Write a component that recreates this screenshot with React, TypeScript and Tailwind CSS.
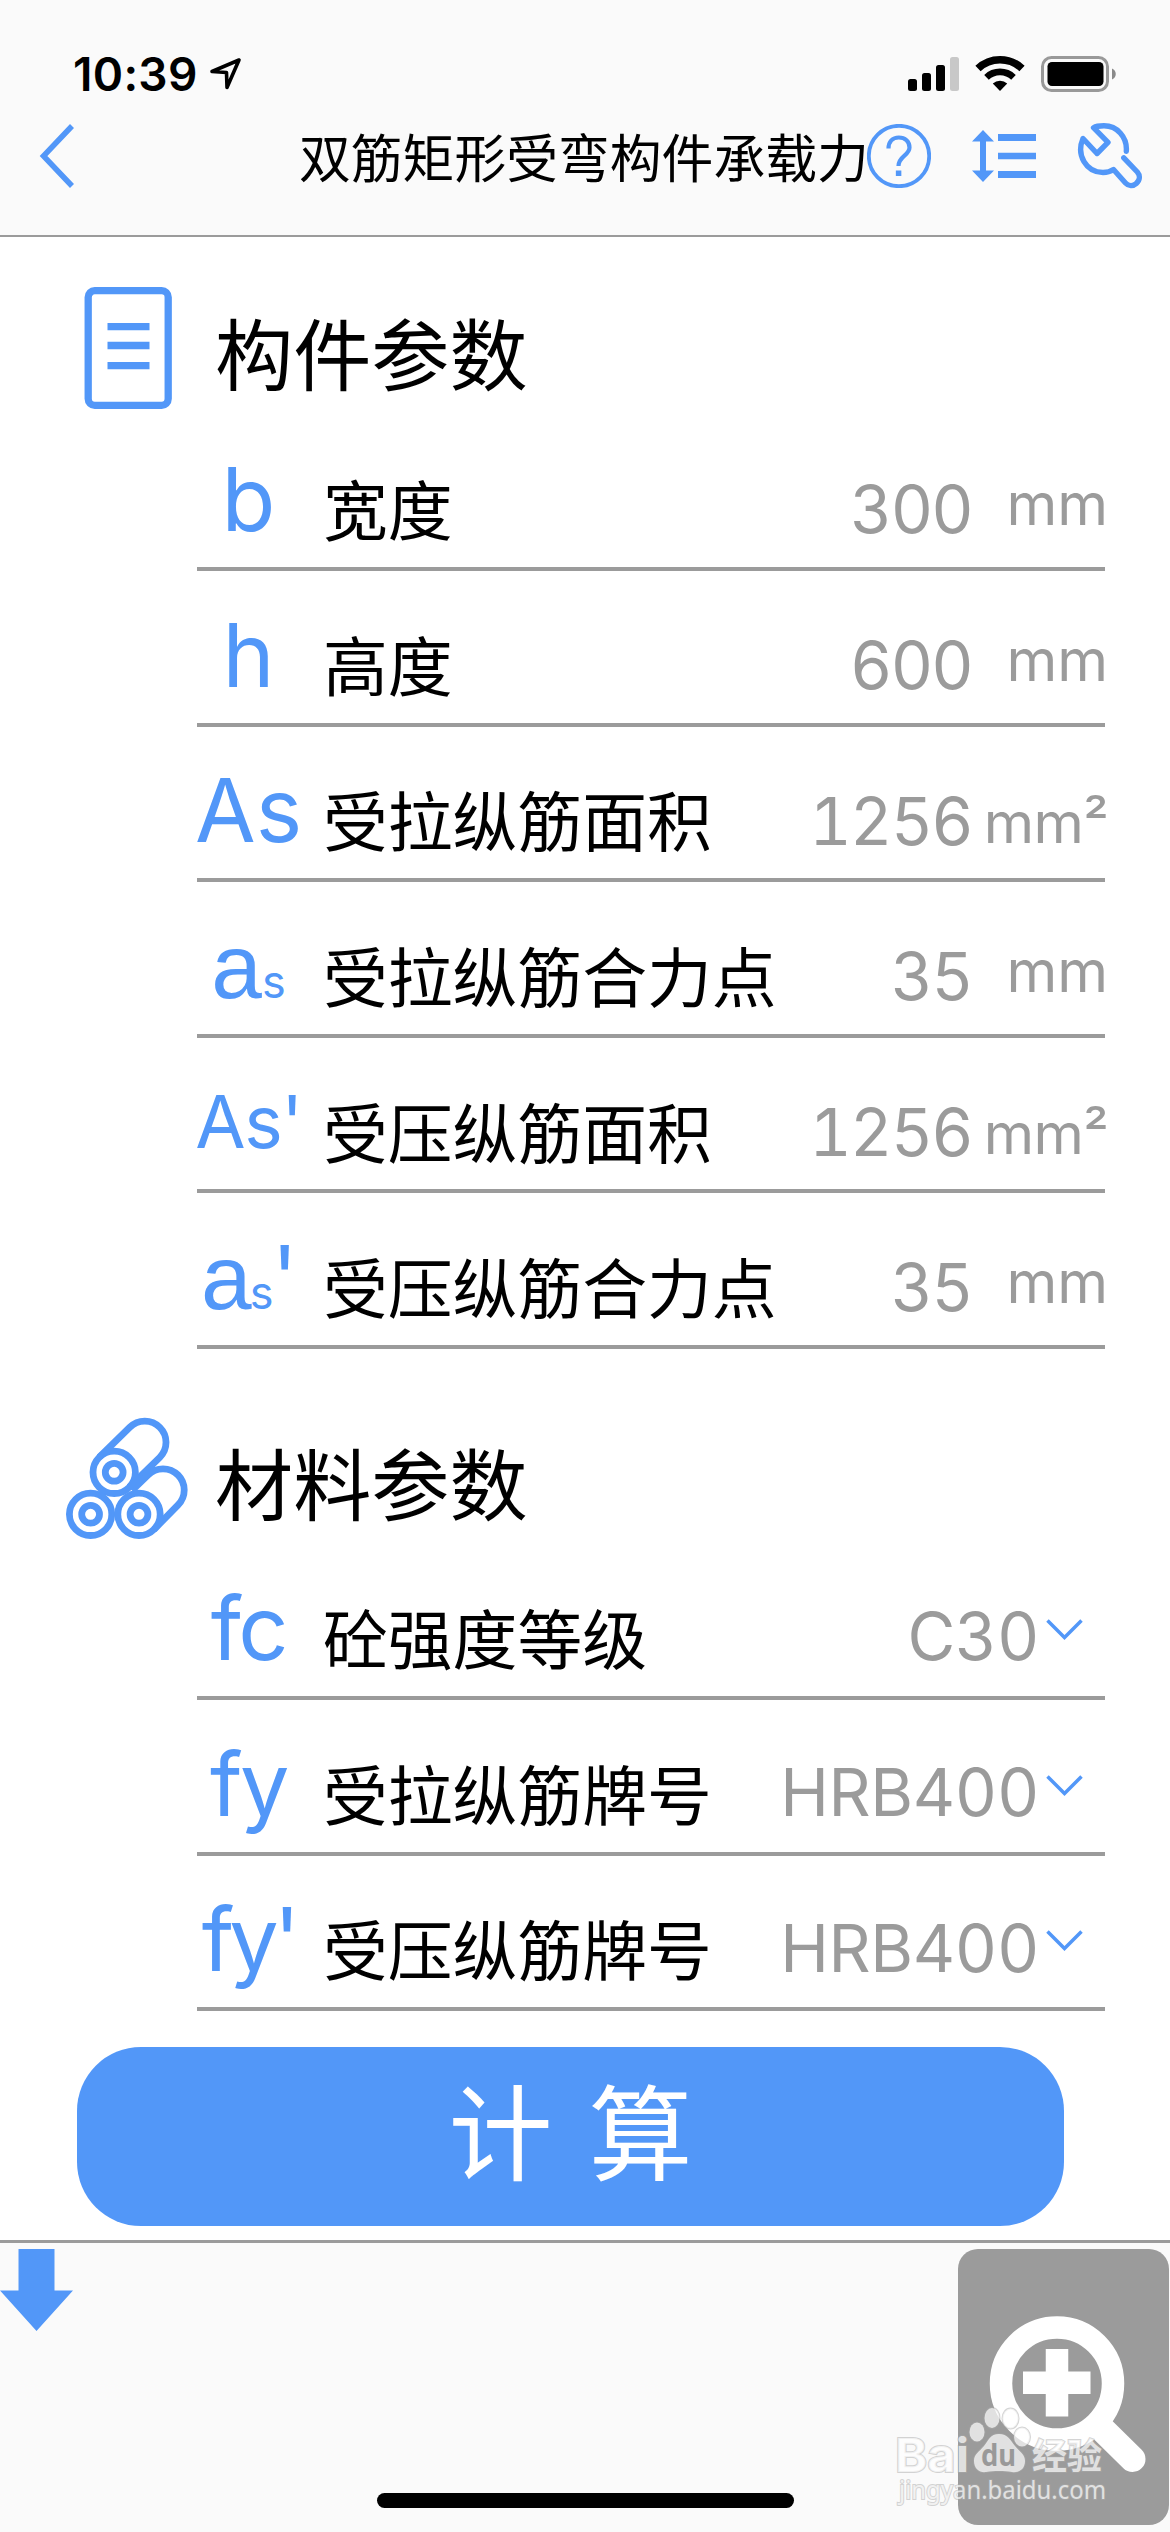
import React from "react";

interface ParamField {
  id: string;
  symbol: React.ReactNode;
  label: string;
  value: string;
  unit?: "mm" | "mm²";
}

const aSub = (
  <>
    <span className="font-['Liberation_Sans'] text-[91px] leading-[0]">a</span>
    <span className="text-[45px] leading-[0]">s</span>
  </>
);

const memberFields: ParamField[] = [
  { id: "b", symbol: "b", label: "宽度", value: "300", unit: "mm" },
  { id: "h", symbol: "h", label: "高度", value: "600", unit: "mm" },
  { id: "As", symbol: "As", label: "受拉纵筋面积", value: "1256", unit: "mm²" },
  { id: "as", symbol: aSub, label: "受拉纵筋合力点", value: "35", unit: "mm" },
  {
    id: "As2",
    symbol: <span className="relative -top-[5px] text-[73px] leading-[0] tracking-[-1.5px]">As'</span>,
    label: "受压纵筋面积",
    value: "1256",
    unit: "mm²",
  },
  {
    id: "as2",
    symbol: <span className="tracking-[-2px]">{aSub}'</span>,
    label: "受压纵筋合力点",
    value: "35",
    unit: "mm",
  },
];

const materialFields: ParamField[] = [
  { id: "fc", symbol: <span className="tracking-[-2.5px]">fc</span>, label: "砼强度等级", value: "C30" },
  { id: "fy", symbol: <span className="tracking-[-2.5px]">fy</span>, label: "受拉纵筋牌号", value: "HRB400" },
  { id: "fy2", symbol: <span className="tracking-[-5px]">fy'</span>, label: "受压纵筋牌号", value: "HRB400" },
];

function StatusBar() {
  return (
    <div className="flex h-[110px] shrink-0 items-start pt-[54px] pl-[73px] pr-[53px]">
      <span className="text-[46px] font-semibold leading-[40px] tracking-[0.3px]">10:39</span>
      <svg className="ml-[11px] mt-[2px]" width="34" height="36" viewBox="0 0 34 36" fill="none">
        <path d="M30 4 3 15.5 17.5 16.5 18 31.5Z" stroke="#000" strokeWidth="3.6" strokeLinejoin="round" />
      </svg>
      <div className="ml-auto flex items-start">
        <svg width="52" height="36" viewBox="0 0 52 36" className="mt-[2px]">
          <rect x="0" y="23" width="9" height="12" rx="2.5" />
          <rect x="14" y="17" width="9" height="18" rx="2.5" />
          <rect x="28" y="9" width="9" height="26" rx="2.5" />
          <rect x="42" y="1" width="9" height="34" rx="2.5" fill="#c8c8c8" />
        </svg>
        <svg className="ml-[15px]" width="50" height="38" viewBox="0 0 50 38" fill="none" stroke="#000">
          <path d="M3 14.5a32 32 0 0 1 44 0" strokeWidth="7.6" />
          <path d="M11.5 23.3a19.5 19.5 0 0 1 27 0" strokeWidth="6.6" />
          <path d="M25 37 17.8 29.6a10.5 10.5 0 0 1 14.4 0Z" fill="#000" stroke="none" />
        </svg>
        <svg className="ml-[16px] mt-[2px]" width="76" height="36" viewBox="0 0 76 36">
          <rect x="1.5" y="1.5" width="65" height="33" rx="9" fill="none" stroke="#999" strokeWidth="3" />
          <rect x="6.5" y="6" width="56" height="24" rx="4.5" />
          <path d="M71 12.5c5 2 5 9 0 11Z" fill="#8a8a8a" />
        </svg>
      </div>
    </div>
  );
}

function NavBar() {
  return (
    <div className="flex h-[125px] shrink-0 items-start pl-[38px] text-[#5297f8]">
      <svg className="mt-[12px]" width="38" height="68" viewBox="0 0 38 68" fill="none">
        <path d="M34 4 5.5 34 34 64" stroke="currentColor" strokeWidth="5.5" />
      </svg>
      <h1 className="ml-[223px] mt-[20px] w-[568px] whitespace-nowrap font-['Noto_Sans_CJK_SC'] text-[51.8px] leading-none text-black">
        双筋矩形受弯构件承载力
      </h1>
      <svg className="mt-[14px] shrink-0" width="64" height="64" viewBox="0 0 64 64" fill="none">
        <circle cx="32" cy="32" r="30.2" stroke="currentColor" strokeWidth="3.8" />
        <path
          d="M21.5 24.5c0-7 4-11 10.3-11s10.7 4 10.7 10c0 8-11 8.5-11 18.5"
          stroke="currentColor"
          strokeWidth="4.2"
        />
        <path d="M31.6 46.500v5.5" stroke="currentColor" strokeWidth="5.5" />
      </svg>
      <svg className="ml-[41px] mt-[20px] shrink-0" width="64" height="52" viewBox="0 0 64 52" fill="currentColor">
        <path d="M11 0 22 11.5H14V40.5h8L11 52 0 40.5H8V11.5H0Z" />
        <path d="M26 4h38v7H26zM26 22.7h38v6.6H26zM26 41h38v7H26z" />
      </svg>
      <svg className="ml-[41px] mt-[13px] shrink-0" width="66" height="66" viewBox="0 0 66 66" fill="none">
        <path
          d="M49.3 28.3C50.5 14 40 2.8 27 2.8c-4.5 0-8 .4-10.5 1.9L31 19.3 20 30.5 6 15.5C-1 32 9 49.5 26 49.5c4 0 7.5-1 10.5-3L48.5 60c3 3.3 7.5 3.5 10.8.5 3.7-3.3 4-8 1-11.5L46.8 34.8"
          stroke="currentColor"
          strokeWidth="5.4"
          strokeLinecap="round"
          strokeLinejoin="round"
        />
      </svg>
    </div>
  );
}

function DocumentIcon() {
  return (
    <svg width="122" height="122" viewBox="0 0 122 122" fill="none" stroke="#5297f8" strokeWidth="7.3">
      <rect x="22.2" y="3.7" width="80" height="114.6" rx="6.5" />
      <path d="M41.5 39.7h42M41.5 58.5h42M41.5 78.7h42" />
    </svg>
  );
}

function LogsIcon() {
  return (
    <svg width="122" height="122" viewBox="0 0 122 122" fill="none" stroke="#5297f8" strokeWidth="6.8">
      <path d="m33.2 40.3 30.6-30A21.2 21.2 0 0 1 93.8 40.3l-30.6 30" />
      <path d="M66 73.5 82 58a21.2 21.2 0 0 1 30 30L88 112.500" />
      <circle cx="48.2" cy="55.3" r="21.2" />
      <circle cx="48.2" cy="55.3" r="8.9" />
      <circle cx="24.6" cy="97.3" r="21.2" />
      <circle cx="24.6" cy="97.3" r="8.9" />
      <circle cx="73" cy="97.3" r="21.2" />
      <circle cx="73" cy="97.3" r="8.9" />
    </svg>
  );
}

function SectionHeading({ icon, title }: { icon: React.ReactNode; title: string }) {
  return (
    <div className="flex h-[122px] shrink-0 items-center gap-[27px] pl-[66px]">
      {icon}
      <h2 className="pt-[6px] font-['Noto_Sans_CJK_SC'] text-[78.2px] leading-none">{title}</h2>
    </div>
  );
}

function FieldRow({ field }: { field: ParamField }) {
  return (
    <div className="ml-[197px] flex h-[155.6px] w-[908px] shrink-0 items-end whitespace-nowrap border-b-4 border-[#9b9b9b]">
      <div className="mb-[24px] flex h-[88px] w-[103px] justify-center text-[88px] leading-[88px] text-[#5297f8]">
        <span>{field.symbol}</span>
      </div>
      <div className="mb-[27px] ml-[23px] font-['Noto_Sans_CJK_SC'] text-[64.8px] leading-none">{field.label}</div>
      {field.unit ? (
        <>
          <div className="mb-[24px] ml-auto text-[65.5px] leading-none tracking-[-1.8px] tabular-nums text-[#9b9b9b]">
            {field.value}
          </div>
          {field.unit === "mm" ? (
            <div className="mb-[34px] -mr-[3px] w-[136px] text-right text-[58px] leading-none text-[#9b9b9b]">mm</div>
          ) : (
            <div className="mb-[27px] -mr-[3px] w-[136px] text-right text-[57.5px] leading-none tracking-[-0.6px] text-[#9b9b9b]">
              mm²
            </div>
          )}
        </>
      ) : (
        <>
          <div className="mb-[26px] ml-auto text-[65.5px] leading-none tracking-[-0.4px] tabular-nums text-[#9b9b9b]">
            {field.value}
          </div>
          <svg className="mb-[55px] ml-[7px] mr-[22px]" width="37" height="22" viewBox="0 0 37 22" fill="none">
            <path d="M1.5 1.5 18.5 18.5 35.5 1.5" stroke="#5297f8" strokeWidth="3.5" />
          </svg>
        </>
      )}
    </div>
  );
}

function Watermark() {
  return (
    <svg
      className="absolute bottom-[10px] right-[61px] overflow-visible font-['Noto_Sans','Noto_Sans_CJK_SC',sans-serif]"
      width="214"
      height="118"
      viewBox="0 0 214 118"
      fill="#fff"
      fillOpacity="0.7"
      stroke="#aaa"
      strokeOpacity="0.5"
      strokeWidth="2"
      paintOrder="stroke"
    >
      <text
        className="font-['Inter']"
        x="0"
        y="68"
        fontSize="47"
        fontWeight="700"
        textLength="74"
        lengthAdjust="spacingAndGlyphs"
      >
        Bai
      </text>
      <ellipse cx="82" cy="28" rx="7.5" ry="9.5" />
      <ellipse cx="97" cy="14" rx="7.5" ry="10" />
      <ellipse cx="115.5" cy="14.5" rx="8" ry="10" />
      <ellipse cx="127" cy="33" rx="8" ry="9.5" />
      <path d="M104 30c9 0 11 6 16 12s10 8 10 15c0 9-7 12-13 11-5-.8-8-1-13-1s-8 .2-13 1c-6 1-12-3-12-11 0-7 5-9 10-15s6-12 15-12Z" />
      <text
        x="86"
        y="62"
        fontSize="31"
        fontWeight="700"
        fill="#999"
        fillOpacity="1"
        stroke="none"
        textLength="35"
        lengthAdjust="spacingAndGlyphs"
      >
        du
      </text>
      <text x="137" y="65" fontSize="35" fontWeight="700" textLength="70" lengthAdjust="spacingAndGlyphs">
        经验
      </text>
      <text x="4" y="95" fontSize="25" textLength="207" lengthAdjust="spacingAndGlyphs">
        jingyan.baidu.com
      </text>
    </svg>
  );
}

function BottomBar() {
  return (
    <div className="relative flex h-[292px] shrink-0 items-start justify-between border-t-[3px] border-[#9b9b9b] bg-[#fafafa] pt-[6px] pr-px">
      <svg width="73" height="82" viewBox="0 0 73 82" fill="#5297f8">
        <path d="M18.5 0H54.5V41.5H73L36.5 82 0 41.5H18.5Z" />
      </svg>
      <div className="ml-[304px] mt-[244px] h-[15px] w-[417px] rounded-full bg-black" />
      <div className="ml-auto h-[276px] w-[211px] rounded-[20px] bg-[#9b9b9b]">
        <svg width="211" height="276" viewBox="0 0 211 276" fill="none" stroke="#fff">
          <circle cx="99" cy="134.5" r="56" strokeWidth="22.5" />
          <path d="M99 100v67.5M65 133.7h67.5" strokeWidth="22.5" />
          <path d="M142 178 174.5 210" strokeWidth="26" strokeLinecap="round" />
        </svg>
      </div>
      <Watermark />
    </div>
  );
}

export default function App() {
  return (
    <div className="flex h-[2532px] w-[1170px] flex-col overflow-hidden bg-white font-['Inter','Noto_Sans_CJK_SC',sans-serif] text-black">
      <header className="flex h-[237px] shrink-0 flex-col border-b-2 border-[#9b9b9b] bg-[#fafafa]">
        <StatusBar />
        <NavBar />
      </header>

      <main className="flex h-[2003px] shrink-0 flex-col pt-[50px]">
        <SectionHeading icon={<DocumentIcon />} title="构件参数" />
        <div className="flex flex-col pt-[6.4px]">
          {memberFields.map((field) => (
            <FieldRow key={field.id} field={field} />
          ))}
        </div>

        <div className="h-[68px] shrink-0" />
        <SectionHeading icon={<LogsIcon />} title="材料参数" />
        <div className="flex flex-col pt-[5.4px]">
          {materialFields.map((field) => (
            <FieldRow key={field.id} field={field} />
          ))}
        </div>

        <button className="ml-[77px] mt-[36px] flex h-[179px] w-[987px] shrink-0 items-center justify-center gap-[36px] rounded-[64px] bg-[#5297f8] pb-[18px] font-['Noto_Sans_CJK_SC'] text-[104px] leading-none text-white">
          <span>计</span>
          <span>算</span>
        </button>
      </main>

      <BottomBar />
    </div>
  );
}
